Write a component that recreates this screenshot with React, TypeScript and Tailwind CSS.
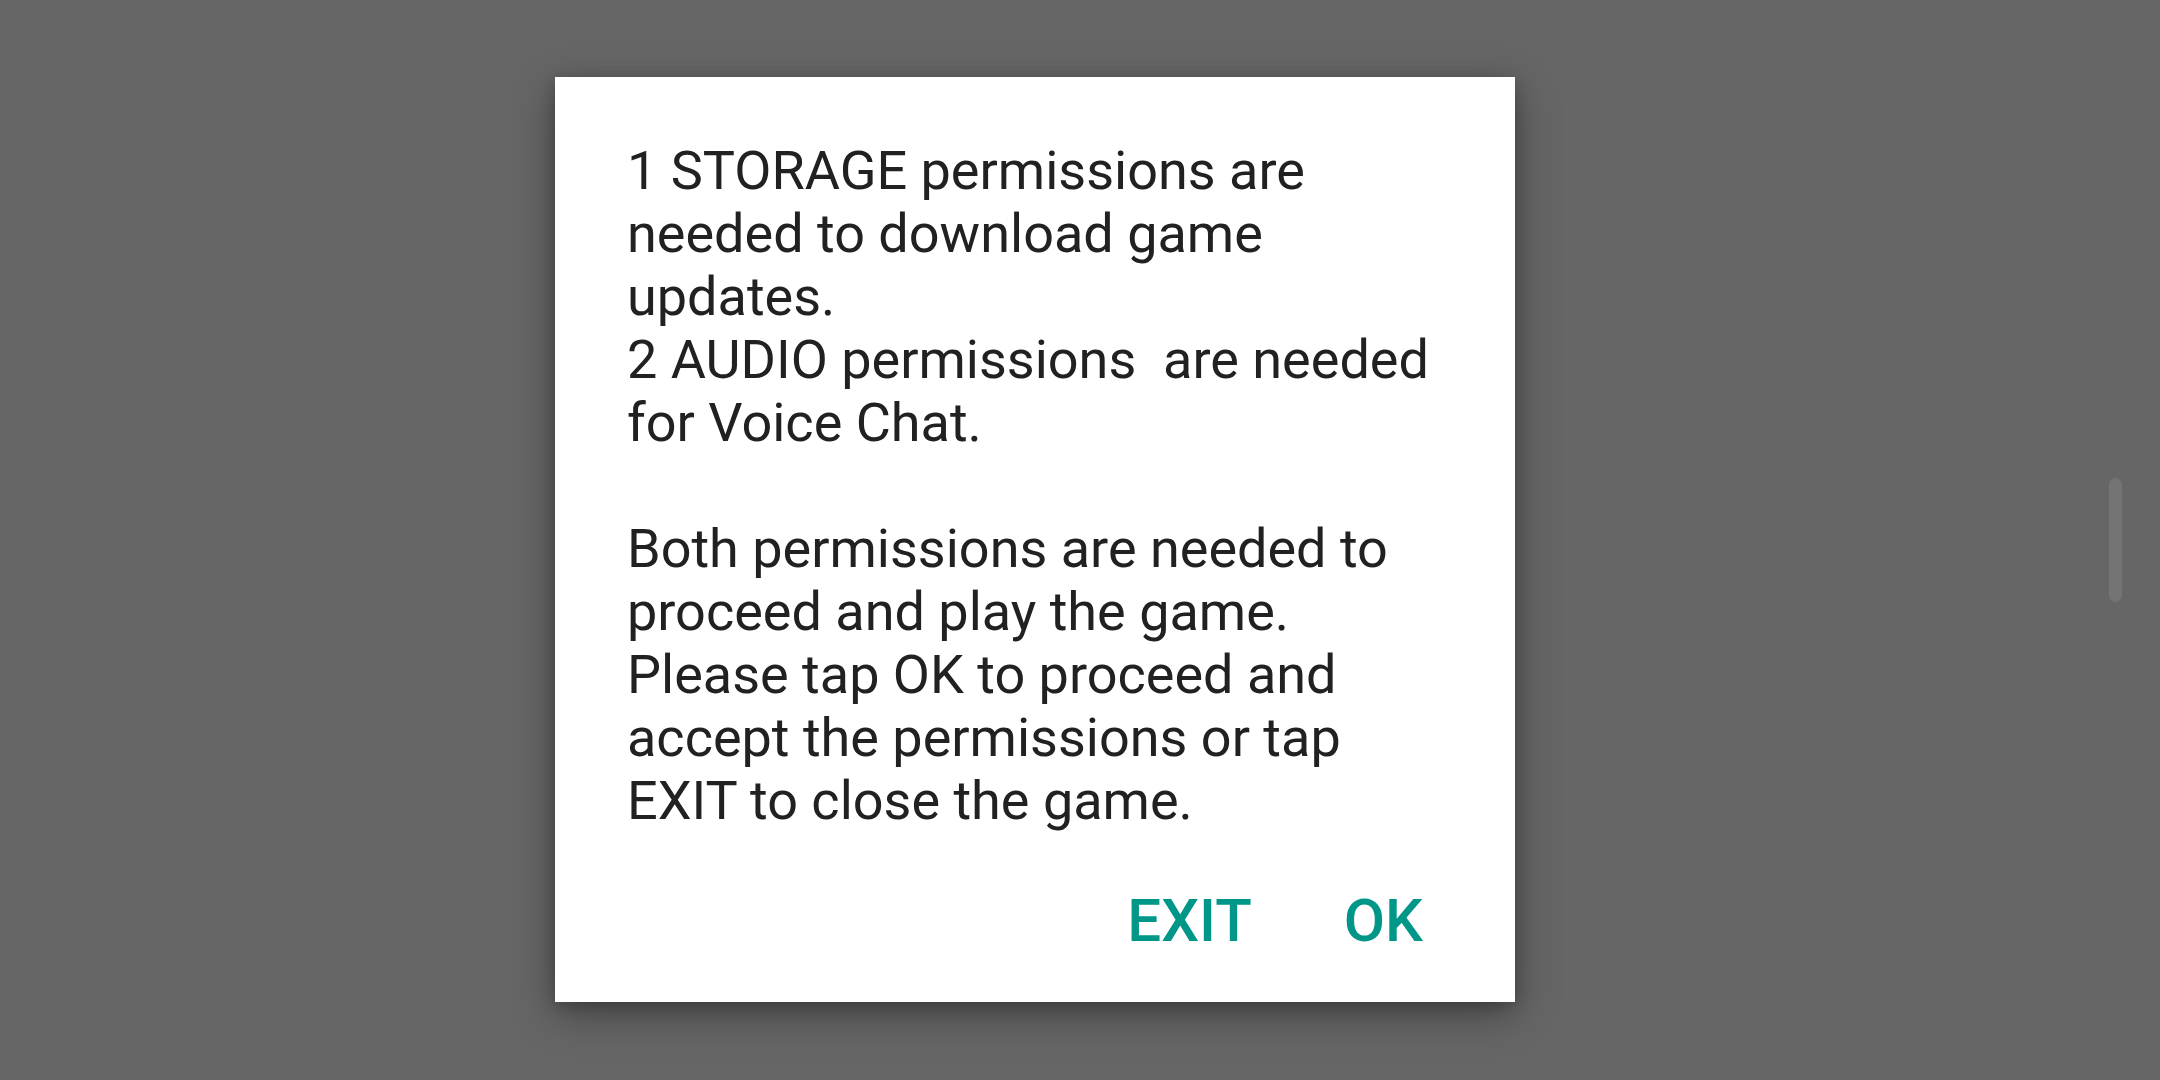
export default function App() {
  return (
    <div className="relative flex h-[1080px] w-[2160px] items-start overflow-hidden bg-[#666666] font-['Roboto','Liberation_Sans',sans-serif]">
      <div
        role="dialog"
        aria-modal="true"
        className="ml-[555px] mt-[77px] flex h-[925px] w-[960px] flex-col bg-white shadow-[0_12px_40px_rgba(0,0,0,0.35),0_4px_14px_rgba(0,0,0,0.2)]"
      >
        <p className="pl-[72px] pr-[40px] pt-[62px] text-[54px] leading-[63px] text-[#212121] whitespace-pre-wrap">
          {`1 STORAGE permissions are
needed to download game
updates.
2 AUDIO permissions  are needed
for Voice Chat.

Both permissions are needed to
proceed and play the game.
Please tap OK to proceed and
accept the permissions or tap
EXIT to close the game.`}
        </p>

        <div className="mt-[54px] flex justify-end gap-[92px] pr-[92px]">
          <button className="text-[60px] font-medium leading-[70px] text-[#009688]">
            EXIT
          </button>
          <button className="text-[60px] font-medium leading-[70px] text-[#009688]">
            OK
          </button>
        </div>
      </div>

      <div className="absolute left-[2109px] top-[478px] h-[124px] w-[13px] rounded-full bg-[#747474]" />
    </div>
  );
}
